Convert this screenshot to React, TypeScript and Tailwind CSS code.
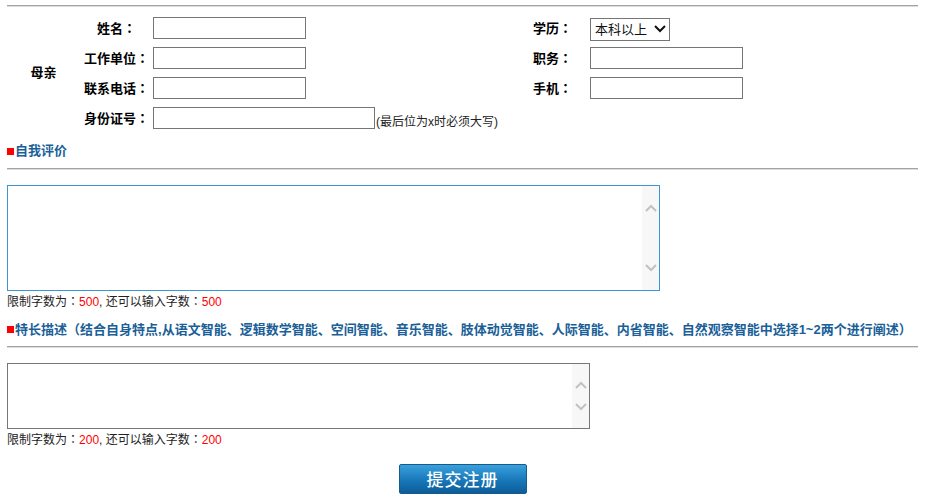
import React from 'react';

const FONT = '"Liberation Sans", "Noto Sans CJK SC", sans-serif';
const TC = { fontFamily: '"Noto Sans CJK TC", sans-serif' };

// full-width punctuation centred in its box, as in the original page
const Colon: React.FC = () => <span style={TC}>：</span>;

const Divider: React.FC<{ className?: string }> = ({ className = '' }) => (
  <div className={`h-[2px] w-full border-t border-t-[#a3a3a3] border-b border-b-[#dedede] ${className}`} />
);

const Chevron: React.FC<{ up?: boolean }> = ({ up }) => (
  <svg width="12" height="8" viewBox="0 0 12 8" className="block">
    <path
      d={up ? 'M1 7 L6 2 L11 7' : 'M1 1 L6 6 L11 1'}
      fill="none"
      stroke="#c2c2c2"
      strokeWidth="2"
    />
  </svg>
);

interface TextBoxProps {
  width: string;
  height: string;
  border: string;
  arrowsSpread: boolean;
}

const TextBox: React.FC<TextBoxProps> = ({ width, height, border, arrowsSpread }) => (
  <div className={`flex ${width} ${height} border ${border} bg-white`}>
    <textarea className="flex-1 resize-none overflow-hidden outline-none p-1 text-[13px]" />
    <div
      className={`w-[17px] bg-[#f7f7f7] flex flex-col items-center ${
        arrowsSpread ? 'justify-between py-[18px]' : 'justify-center gap-[14px]'
      }`}
    >
      <Chevron up />
      <Chevron />
    </div>
  </div>
);

const Counter: React.FC<{ max: number }> = ({ max }) => (
  <div className="h-[20px] leading-[20px] text-[12px] text-[#222]">
    限制字数为<Colon /><span className="text-[#ff0000]">{max}</span>, 还可以输入字数<Colon />
    <span className="text-[#ff0000]">{max}</span>
  </div>
);

const Heading: React.FC<{ children: React.ReactNode; className?: string }> = ({ children, className = '' }) => (
  <div className={`h-[20px] flex items-center text-[13px] font-bold text-[#1a5f98] whitespace-nowrap ${className}`}>
    <span className="inline-block w-[7px] h-[7px] bg-[#ff0000] mr-[1px]" />
    <span>{children}</span>
  </div>
);

const Input: React.FC<{ wide?: boolean }> = ({ wide }) => (
  <input
    type="text"
    className={`${wide ? 'w-[222px]' : 'w-[153px]'} h-[22px] border border-[#767676] bg-white outline-none px-1 text-[13px]`}
  />
);

const Label: React.FC<{ children: React.ReactNode }> = ({ children }) => (
  <div className="text-center text-[13px] font-bold text-black">
    {children}
    <Colon />
  </div>
);

export default function App() {
  return (
    <div className="bg-white w-[937px] h-[500px] overflow-hidden" style={{ fontFamily: FONT }}>
      <div className="ml-[7px] w-[911px] pt-[5px]">
        <Divider />

        {/* Mother info */}
        <div className="mt-[6px] flex">
          <div className="w-[73px] flex items-center justify-center text-[13px] font-bold">母亲</div>
          <div className="flex-1 grid grid-cols-[73px_362px_75px_1fr] auto-rows-[30px] items-center">
            <Label>姓名</Label>
            <Input />
            <Label>学历</Label>
            <div className="relative w-[80px] h-[23px]">
              <select className="appearance-none w-full h-full border border-[#767676] bg-white pl-[4px] text-[13px] text-[#111] outline-none">
                <option>本科以上</option>
              </select>
              <svg width="12" height="8" viewBox="0 0 12 8" className="absolute right-[4px] top-[8px] pointer-events-none">
                <path d="M1 1 L6 6 L11 1" fill="none" stroke="#111" strokeWidth="2" />
              </svg>
            </div>

            <Label>工作单位</Label>
            <Input />
            <Label>职务</Label>
            <Input />

            <Label>联系电话</Label>
            <Input />
            <Label>手机</Label>
            <Input />

            <Label>身份证号</Label>
            <div className="col-span-3 flex items-end">
              <Input wide />
              <span className="text-[12px] leading-[14px] ml-[1px] text-[#222]">(最后位为x时必须大写)</span>
            </div>
          </div>
        </div>

        <Heading className="mt-[8px]">自我评价</Heading>
        <Divider className="mt-[7px]" />
        <div className="mt-[15px]">
          <TextBox width="w-[653px]" height="h-[106px]" border="border-[#3a97d4]" arrowsSpread />
        </div>
        <Counter max={500} />

        <Heading className="mt-[8px]">
          特长描述<span style={TC}>（</span>结合自身特点,从语文智能、逻辑数学智能、空间智能、音乐智能、肢体动觉智能、人际智能、内省智能、自然观察智能中选择1~2两个进行阐述<span style={TC}>）</span>
        </Heading>
        <Divider className="mt-[7px]" />
        <div className="mt-[15px]">
          <TextBox width="w-[583px]" height="h-[66px]" border="border-[#777777]" arrowsSpread={false} />
        </div>
        <Counter max={200} />

        <div className="mt-[15px] flex justify-center">
          <button
            type="button"
            className="w-[128px] h-[30px] rounded-[2px] border border-[#175a8c] bg-gradient-to-b from-[#3aa0dc] via-[#1a7bbd] to-[#0c5d98] text-white text-[17px] font-medium tracking-[1px]"
            style={{ fontFamily: '"Noto Sans CJK SC", serif' }}
          >
            提交注册
          </button>
        </div>
      </div>
    </div>
  );
}
